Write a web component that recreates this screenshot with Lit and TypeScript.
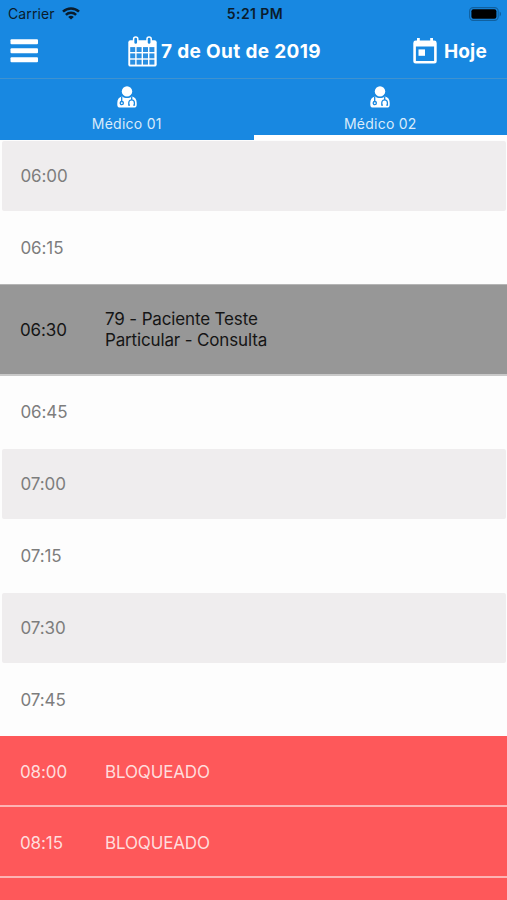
import { LitElement, html, css, svg } from "lit";
import { customElement, property } from "lit/decorators.js";
import { classMap } from "lit/directives/class-map.js";

type Kind = "free" | "booked" | "blocked";

interface Slot {
  time: string;
  kind: Kind;
  shaded?: boolean;
  lines?: string[];
}

const SLOTS: Slot[] = [
  { time: "06:00", kind: "free", shaded: true },
  { time: "06:15", kind: "free" },
  { time: "06:30", kind: "booked", lines: ["79 - Paciente Teste", "Particular - Consulta"] },
  { time: "06:45", kind: "free" },
  { time: "07:00", kind: "free", shaded: true },
  { time: "07:15", kind: "free" },
  { time: "07:30", kind: "free", shaded: true },
  { time: "07:45", kind: "free" },
  { time: "08:00", kind: "blocked", lines: ["BLOQUEADO"] },
  { time: "08:15", kind: "blocked", lines: ["BLOQUEADO"] },
  { time: "", kind: "blocked" },
];

const wifiIcon = html`<svg width="18" height="13" viewBox="0 0 18 13">
  <g fill="none" stroke="#0a1c2c" stroke-width="2.5">
    <path d="M1 4.6C5.4.3 12.6.3 17 4.6" />
    <path d="M3.9 7.9c2.9-2.8 7.3-2.8 10.2 0" />
  </g>
  <path d="M9 12.6 6.2 9.9c1.6-1.5 4-1.5 5.6 0z" fill="#0a1c2c" />
</svg>`;

const batteryIcon = html`<svg width="33" height="14" viewBox="0 0 33 14">
  <rect x=".6" y=".6" width="28.6" height="12.8" rx="3.6" fill="none" stroke="#10609f" stroke-width="1.1" />
  <rect x="2.4" y="2.3" width="25" height="9.4" rx="2" fill="#000" />
  <path d="M30.6 4.6c1.9.7 1.9 4.1 0 4.8z" fill="#10609f" />
</svg>`;

const menuIcon = html`<svg width="28" height="24" viewBox="0 0 28 24" fill="#fff">
  <rect x=".5" y=".2" width="27.5" height="5" rx="1" />
  <rect x=".5" y="9.3" width="27.5" height="5" rx="1" />
  <rect x=".5" y="18.3" width="27.5" height="5" rx="1" />
</svg>`;

const cells = [0, 1, 2].flatMap((row) =>
  [0, 1, 2, 3].map(
    (col) => svg`<rect x=${2.2 + col * 6.4} y=${11.1 + row * 6.3} width="5" height="4.9" fill="#2b90e2" />`
  )
);

const calendarIcon = html`<svg width="29" height="31" viewBox="0 0 29 31">
  <rect x=".3" y="4.2" width="28.4" height="26.4" rx="2.2" fill="#fff" />
  ${cells}
  <g fill="#1888e1" stroke="#fff" stroke-width="1.5">
    <rect x="5.6" y=".9" width="4.2" height="7.6" rx="2.1" />
    <rect x="19" y=".9" width="4.2" height="7.6" rx="2.1" />
  </g>
</svg>`;

const todayIcon = html`<svg width="24" height="26" viewBox="0 0 24 26" fill="#fff">
  <path
    fill-rule="evenodd"
    d="M4 0h2.8v2.6h10.4V0H20v2.6h1.2A2.5 2.5 0 0 1 23.7 5v18a2.5 2.5 0 0 1-2.5 2.5H2.8A2.5 2.5 0 0 1 .3 23V5a2.5 2.5 0 0 1 2.5-2.4H4zM2.9 8.6v14.3h18.2V8.6z"
  />
  <rect x="5.5" y="11.4" width="6.5" height="6.4" />
</svg>`;

const doctorIcon = html`<svg width="20" height="22" viewBox="0 0 20 22">
  <circle cx="10" cy="5.4" r="5.2" fill="#fff" />
  <path
    d="M5.2 10.5c1.3 1 3 1.6 4.8 1.6s3.5-.6 4.8-1.6C18 11 19.7 13.4 19.7 17v1.7a2.9 2.9 0 0 1-2.9 2.9H3.2a2.9 2.9 0 0 1-2.9-2.9V17c0-3.6 1.7-6 4.9-6.5z"
    fill="#fff"
  />
  <g fill="none" stroke="#1888e1" stroke-width="1.3">
    <path d="M4.7 10.8v4.7" />
    <circle cx="4.8" cy="17.1" r="1.6" />
    <path d="M14.7 10.8v2.9M13 19.2h-1.2v-2.5c0-1.7 1.2-2.9 2.8-2.9s2.800 1.200 2.800 2.900v2.500h-1.200" />
  </g>
</svg>`;

@customElement("status-bar")
class StatusBar extends LitElement {
  static styles = css`
    :host {
      display: grid;
      grid-template-columns: 1fr auto 1fr;
      align-items: center;
      height: 27px;
      padding: 0 5px 0 8px;
      color: #0a1c2c;
      font-size: 14px;
    }
    .carrier {
      display: flex;
      align-items: center;
      gap: 7px;
      letter-spacing: 0.1px;
    }
    .clock {
      font-weight: 600;
      font-size: 14px;
      letter-spacing: 0.42px;
    }
    .battery {
      display: flex;
      justify-content: flex-end;
    }
  `;

  render() {
    return html`
      <div class="carrier"><span>Carrier</span>${wifiIcon}</div>
      <div class="clock">5:21 PM</div>
      <div class="battery">${batteryIcon}</div>
    `;
  }
}

@customElement("doctor-tab")
class DoctorTab extends LitElement {
  @property() label = "";
  @property({ type: Boolean, reflect: true }) active = false;

  static styles = css`
    :host {
      flex: 1;
      box-sizing: border-box;
      display: flex;
      flex-direction: column;
      align-items: center;
      height: 61px;
      padding-top: 7px;
      border-bottom: 5px solid transparent;
      color: #d9ebfa;
      font-size: 14px;
      line-height: 18px;
    }
    :host([active]) {
      border-bottom-color: #fff;
    }
    .label {
      margin-top: 7px;
      letter-spacing: 0.25px;
    }
    svg {
      display: block;
    }
  `;

  render() {
    return html`${doctorIcon}<span class="label">${this.label}</span>`;
  }
}

@customElement("slot-row")
class SlotRow extends LitElement {
  @property({ attribute: false }) slotData!: Slot;

  static styles = css`
    :host {
      display: block;
    }
    .row {
      box-sizing: border-box;
      display: grid;
      grid-template-columns: 85px 1fr;
      align-items: center;
      height: 72px;
      padding-left: 20px;
      font-size: 17px;
      line-height: 21px;
      color: #7d7d7d;
    }
    .free {
      height: 70px;
      margin: 0 1px 0 2px;
      padding: 1px 0 0 18.5px;
      border-radius: 2px;
    }
    .frame {
      padding: 1px 0;
    }
    .shaded {
      background: #efedee;
    }
    .booked {
      height: 92px;
      padding-top: 1px;
      background: #979797;
      border-top: 1px solid #b5b5b5;
      border-bottom: 2px solid #c9c9c9;
      color: #151515;
    }
    .blocked {
      height: 71px;
      padding-top: 3px;
      background: #fe585a;
      border-bottom: 2px solid #fdb3b3;
      color: #ffdcdc;
    }
    .time {
      letter-spacing: -0.1px;
    }
    .line {
      display: block;
      letter-spacing: -0.15px;
    }
  `;

  render() {
    const { time, kind, shaded, lines = [] } = this.slotData;
    const row = html`<div class=${classMap({ row: true, [kind]: true, shaded: !!shaded })}>
      <span class="time">${time}</span>
      <div class="details">${lines.map((l) => html`<span class="line">${l}</span>`)}</div>
    </div>`;
    return kind === "free" ? html`<div class="frame">${row}</div>` : row;
  }
}

@customElement("app-root")
class AppRoot extends LitElement {
  static styles = css`
    :host {
      display: flex;
      flex-direction: column;
      width: 100%;
      height: 900px;
      overflow: hidden;
      background: #fdfdfd;
      font-family: Inter, "Liberation Sans", sans-serif;
    }
    .top {
      flex: none;
      background: #1888e1;
    }
    .bar {
      display: flex;
      align-items: center;
      box-sizing: border-box;
      height: 52px;
      padding: 0 20px 3px 10px;
      border-bottom: 1px solid #3f92cf;
      color: #fff;
      font-size: 19px;
      font-weight: 700;
      white-space: nowrap;
    }
    .date {
      display: flex;
      align-items: center;
      gap: 4px;
      margin-left: 90px;
    }
    .title {
      letter-spacing: 0.35px;
    }
    .today {
      display: flex;
      align-items: center;
      gap: 7px;
      margin-left: auto;
      letter-spacing: 0.2px;
    }
    .tabs {
      display: flex;
    }
    .agenda {
      flex: 1;
      min-height: 0;
      overflow: hidden;
    }
    svg {
      display: block;
    }
  `;

  render() {
    return html`
      <header class="top">
        <status-bar></status-bar>
        <div class="bar">
          ${menuIcon}
          <div class="date">${calendarIcon}<span class="title">7 de Out de 2019</span></div>
          <div class="today">${todayIcon}<span>Hoje</span></div>
        </div>
        <nav class="tabs">
          <doctor-tab label="Médico 01"></doctor-tab>
          <doctor-tab label="Médico 02" active></doctor-tab>
        </nav>
      </header>
      <main class="agenda">${SLOTS.map((s) => html`<slot-row .slotData=${s}></slot-row>`)}</main>
    `;
  }
}
